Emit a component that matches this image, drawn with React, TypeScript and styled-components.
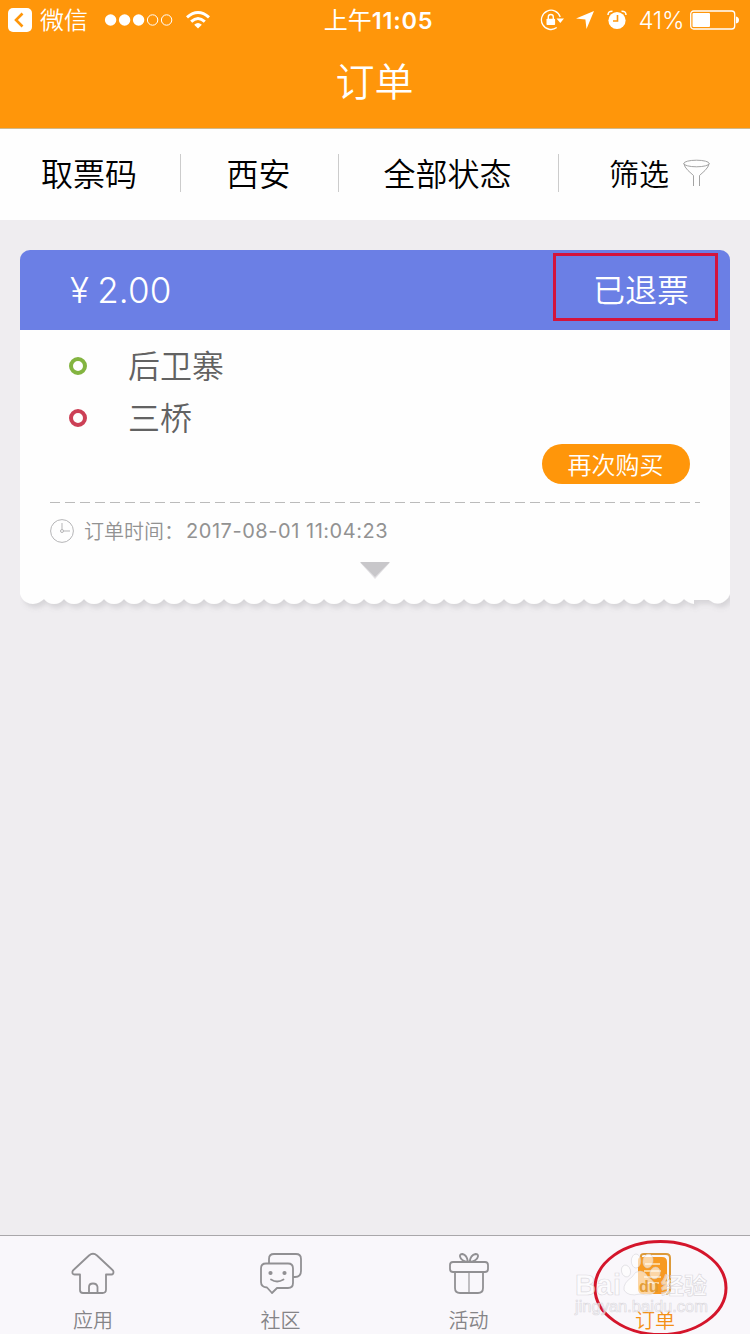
import React from "react";
import styled, { createGlobalStyle } from "styled-components";

const ORANGE = "#ff960a";
const cjk = `"Noto Sans CJK SC", sans-serif`;
const latin = `Inter, "Noto Sans CJK SC", sans-serif`;

const GlobalStyle = createGlobalStyle`
  * { box-sizing: border-box; }
  body { margin: 0; background: #efedf0; font-family: ${cjk}; }
  svg { display: block; flex: none; }
`;

const Screen = styled.div`
  position: relative;
  display: flex;
  flex-direction: column;
  width: 750px;
  height: 1334px;
  overflow: hidden;
  background: #efedf0;
`;

const Header = styled.header`
  height: 129px;
  flex: none;
  background: ${ORANGE};
  border-bottom: 1px solid #cfb88c;
  color: #fff;
`;

const StatusBar = styled.div`
  display: grid;
  grid-template-columns: 250px 1fr 250px;
  align-items: center;
  height: 40px;
`;

const StatusGroup = styled.div<{ $end?: boolean }>`
  display: flex;
  align-items: center;
  justify-content: ${(p) => (p.$end ? "flex-end" : "flex-start")};
  height: 40px;
  padding: ${(p) => (p.$end ? "0 10px 0 0" : "0 0 0 8px")};
`;

const BackLabel = styled.span`
  margin: 0 16px 2px 8px;
  font-size: 24px;
  font-weight: 350;
  line-height: 38px;
`;

const Clock = styled.div`
  display: flex;
  justify-content: center;
  align-items: center;
  height: 40px;
  padding: 1px 0 0 7px;
  font-family: ${latin};
  font-size: 24px;
  line-height: 39px;
`;

const Digits = styled.span`
  font-weight: 600;
  font-size: 23.5px;
  letter-spacing: 0.8px;
`;

const Battery = styled.span`
  margin: 0 6px 0 12px;
  padding-top: 1px;
  font-family: ${latin};
  font-size: 24px;
  font-weight: 350;
  line-height: 39px;
  letter-spacing: -0.4px;
`;

const Title = styled.h1`
  margin: 0;
  height: 88px;
  padding-right: 1px;
  font-size: 39px;
  font-weight: 350;
  line-height: 78px;
  text-align: center;
`;

const FilterBar = styled.nav`
  display: flex;
  align-items: center;
  height: 91px;
  flex: none;
  padding-bottom: 4px;
  background: #fefefe;
`;

const Filter = styled.div<{ $width: number; $last?: boolean }>`
  display: flex;
  flex: none;
  align-items: center;
  justify-content: ${(p) => (p.$last ? "flex-end" : "center")};
  gap: 14px;
  width: ${(p) => p.$width}px;
  height: 38px;
  padding-right: ${(p) => (p.$last ? 40 : 2)}px;
  line-height: 35px;
  font-size: ${(p) => (p.$last ? 30 : 32)}px;
  font-weight: 350;
  color: #000;
  & + & { border-left: 1px solid #ccc; }
`;

const Content = styled.main`
  flex: 1;
  padding: 30px 20px 0;
`;

const CardHead = styled.div`
  display: flex;
  align-items: center;
  justify-content: space-between;
  height: 80px;
  padding: 0 12px 0 50px;
  border-radius: 10px 10px 0 0;
  background: #6b7fe5;
  color: #fff;
`;

const Price = styled.div`
  display: flex;
  gap: 8px;
  font-family: ${latin};
  font-size: 35px;
  font-weight: 350;
  line-height: 80px;
  letter-spacing: 0.2px;
`;

const Status = styled.div`
  width: 165px;
  height: 68px;
  margin-bottom: 6px;
  padding-right: 26px;
  border: 3px solid #d4133c;
  text-align: right;
  font-size: 32px;
  font-weight: 350;
  line-height: 65px;
`;

const CardBody = styled.div`
  display: flex;
  flex-direction: column;
  height: 260px;
  padding: 10px 30px 0;
  background: #fefefe;
`;

const Station = styled.div`
  display: flex;
  align-items: center;
  gap: 41px;
  height: 52px;
  padding-left: 19px;
  font-size: 32px;
  font-weight: 350;
  color: #626262;
`;

const StationName = styled.span`
  padding-bottom: 4px;
  line-height: 48px;
`;

const Ring = styled.i<{ $color: string }>`
  width: 18px;
  height: 18px;
  border: 4px solid ${(p) => p.$color};
  border-radius: 50%;
`;

const BuyAgain = styled.button`
  align-self: flex-end;
  width: 148px;
  height: 40px;
  margin: 0 10px 18px 0;
  padding: 0 1px 0 0;
  border: 0;
  border-radius: 20px;
  background: ${ORANGE};
  color: #fff;
  font-family: ${cjk};
  font-size: 24px;
  font-weight: 350;
  line-height: 40px;
`;

const Dashes = styled.div`
  height: 1px;
  background: repeating-linear-gradient(90deg, #bbb 0 10px, transparent 10px 15px);
`;

const OrderTime = styled.div`
  display: flex;
  align-items: center;
  height: 56px;
  font-family: ${latin};
  font-size: 20px;
  color: #929292;
`;

const TimeLabel = styled.span`
  width: 102px;
  padding: 0 0 2px 10px;
  white-space: nowrap;
  font-family: ${cjk};
  font-weight: 350;
`;

const TimeValue = styled.span`
  margin-left: 10px;
  letter-spacing: 0.54px;
  white-space: nowrap;
`;

const ExpandArrow = styled.svg`
  align-self: center;
  margin-top: 1px;
`;

const TabBar = styled.footer`
  display: grid;
  grid-template-columns: 186px 189px 187px 186px;
  height: 99px;
  flex: none;
  border-top: 1px solid #a9a7aa;
  background: #f9f7fb;
`;

const Tab = styled.div<{ $active?: boolean }>`
  display: flex;
  flex-direction: column;
  align-items: center;
  padding-top: 15px;
  color: ${(p) => (p.$active ? "#f38f14" : "#858487")};
  font-size: 20px;
  font-weight: 350;
  line-height: 26px;
`;

const TabLabel = styled.span`
  margin-top: 12px;
`;

const Highlight = styled.svg`
  position: absolute;
  right: 0;
  bottom: 0;
`;

// Torn ticket edge: regular scallops, a short flat break, then a last scallop.
const scallops = Array.from({ length: 32 }, () => "a12.5 12.5 0 0 0 20 0").join("");
const edge = `M0 0V4Q2 10 6 12 Q15 17 24 9 ${scallops}Q668 13 674 14V10H689Q699 18 708 8L710 4V0Z`;

const TicketEdge = () => (
  <svg width="710" height="26" viewBox="0 0 710 26">
    <defs>
      <filter id="edgeShadow" x="0" y="0" width="100%" height="2">
        <feDropShadow dx="3" dy="4" stdDeviation="2.8" floodColor="#77757a" floodOpacity="0.2" />
      </filter>
    </defs>
    <path d={edge} fill="#fefefe" filter="url(#edgeShadow)" />
  </svg>
);

export default function App() {
  return (
    <>
      <GlobalStyle />
      <Screen>
        <Header>
          <StatusBar>
            <StatusGroup>
              <svg width="24" height="24" viewBox="0 0 24 24">
                <rect width="24" height="24" rx="5" fill="#fff" />
                <path d="M14.500 5.500 8 12l6.500 6.500" fill="none" stroke={ORANGE} strokeWidth="2.600" />
              </svg>
              <BackLabel>微信</BackLabel>
              <svg width="69" height="12" viewBox="0 0 69 12">
                {[0, 1, 2].map((i) => (
                  <circle key={i} cx={6.6 + i * 14} cy="6" r="5.700" fill="#fff" />
                ))}
                {[3, 4].map((i) => (
                  <circle key={i} cx={6.6 + i * 14} cy="6" r="5.200" fill="none" stroke="#fff" />
                ))}
              </svg>
              <svg width="26" height="20" viewBox="0 0 26 20" style={{ marginLeft: 12 }}>
                <g fill="none" stroke="#fff" strokeWidth="3">
                  <path d="M2 7.300Q13-2.300 24 7.300" />
                  <path d="M6.200 11.600Q13 5.500 19.800 11.600" />
                </g>
                <path d="M9.200 14.700Q13 11.500 16.800 14.700L13 18.600Z" fill="#fff" />
              </svg>
            </StatusGroup>
            <Clock>
              上午<Digits>11:05</Digits>
            </Clock>
            <StatusGroup $end>
              <svg width="24" height="22" viewBox="0 0 24 22">
                <path d="M20.200 8A9.600 9.600 0 1 0 16.700 18.600" fill="none" stroke="#fff" strokeWidth="1.300" />
                <path d="M16.500 9.500h7.500l-3.700 4.500z" fill="#fff" />
                <rect x="6.500" y="9.700" width="8.600" height="6.300" rx="0.800" fill="#fff" />
                <path d="M8.300 10V8a2.500 2.500 0 0 1 5 0v2" fill="none" stroke="#fff" strokeWidth="1.400" />
              </svg>
              <svg width="18" height="18" viewBox="0 0 18 18" style={{ marginLeft: 12 }}>
                <path d="M18 0 10.500 18 9.400 8.600 0 7.500Z" fill="#fff" />
              </svg>
              <svg width="20" height="20" viewBox="0 0 20 20" style={{ marginLeft: 13 }}>
                <circle cx="10" cy="10.500" r="8.600" fill="#fff" />
                <path d="M1 5Q1 1 5.500 1.200M19 5Q19 1 14.500 1.200" fill="none" stroke="#fff" strokeWidth="1.500" />
                <path d="M10.500 5v6H6" fill="none" stroke={ORANGE} strokeWidth="1.600" />
              </svg>
              <Battery>41%</Battery>
              <svg width="50" height="20" viewBox="0 0 50 20">
                <rect x="0.700" y="1" width="44" height="18" rx="3" fill="none" stroke="#fff" strokeWidth="1.300" />
                <rect x="2.500" y="3" width="17.500" height="14" rx="1" fill="#fff" />
                <path d="M46 6.500q3 .5 3 3.500t-3 3.500z" fill="#fff" />
              </svg>
            </StatusGroup>
          </StatusBar>
          <Title>订单</Title>
        </Header>

        <FilterBar>
          <Filter $width={180}>取票码</Filter>
          <Filter $width={158}>西安</Filter>
          <Filter $width={220}>全部状态</Filter>
          <Filter $width={192} $last>
            筛选
            <svg width="27" height="28" viewBox="0 0 27 28">
              <g fill="none" stroke="#999" strokeWidth="0.900">
                <ellipse cx="13.500" cy="4.500" rx="12.700" ry="3.300" />
                <path d="M.8 4.500Q1.500 8 5 11.500L10.500 16.500V27M26.200 4.500Q25.500 8 22 11.500L16.500 16.500V27" />
              </g>
            </svg>
          </Filter>
        </FilterBar>

        <Content>
          <CardHead>
            <Price>
              <span>¥</span>
              <span>2.00</span>
            </Price>
            <Status>已退票</Status>
          </CardHead>
          <CardBody>
            <Station>
              <Ring $color="#83b440" />
              <StationName>后卫寨</StationName>
            </Station>
            <Station>
              <Ring $color="#cc4056" />
              <StationName>三桥</StationName>
            </Station>
            <BuyAgain>再次购买</BuyAgain>
            <Dashes />
            <OrderTime>
              <svg width="24" height="24" viewBox="0 0 24 24">
                <g fill="none" stroke="#b5b5b7">
                  <circle cx="12" cy="12" r="11.400" />
                  <circle cx="12" cy="12" r="1.500" />
                  <path d="M12 4v6.500M13.500 12H20" />
                </g>
              </svg>
              <TimeLabel>订单时间：</TimeLabel>
              <TimeValue>2017-08-01 11:04:23</TimeValue>
            </OrderTime>
            <ExpandArrow width="32" height="20" viewBox="0 0 32 20">
              <path d="M1.500 3h29L16 19Z" fill="#e3e1e4" />
              <path d="M1 2h30L16 17Z" fill="#c8c7ca" />
            </ExpandArrow>
          </CardBody>
          <TicketEdge />
        </Content>

        <TabBar>
          <Tab>
            <svg width="44" height="44" viewBox="0 0 44 44" fill="none" stroke="#919093" strokeWidth="1.800" strokeLinejoin="round">
              <path d="M9 23.500H3.500Q1 23.500 1.500 20.500Q1.700 19.500 3 18.500L18 4.500Q22 1 26 4.500L41 18.500Q42.500 19.800 42.500 21Q42.500 23.500 40.500 23.500H35V38.500Q35 42 31.500 42H12Q9 42 9 39Z" />
              <path d="M18 42V36Q18 32.500 22 32.500T26.500 36V42" />
            </svg>
            <TabLabel>应用</TabLabel>
          </Tab>
          <Tab>
            <svg width="44" height="44" viewBox="0 0 44 44" fill="none" stroke="#919093" strokeWidth="1.800" strokeLinejoin="round">
              <path d="M10 12V8Q10 3 15 3H37Q42 3 42 8V20Q42 26 36 26H34" />
              <path d="M7 12.500H29Q34 12.500 34 17.500V32Q34 37 29 37H18L13 42 8 36.500Q2 36 2 31V17.500Q2 12.500 7 12.500Z" />
              <path d="M12 28.500Q18 32.500 24.500 28.500" strokeLinecap="round" />
              <circle cx="11.500" cy="22" r="1.200" fill="#919093" />
              <circle cx="25.500" cy="22" r="1.200" fill="#919093" />
            </svg>
            <TabLabel>社区</TabLabel>
          </Tab>
          <Tab>
            <svg width="44" height="44" viewBox="0 0 44 44" fill="none" stroke="#919093" strokeWidth="1.800">
              <rect x="3" y="11" width="38" height="10" rx="3" />
              <path d="M8 21V37Q8 42 13 42H31Q36 42 36 37V21" />
              <path d="M22 22V42" strokeWidth="1.100" />
              <path d="M21 11Q20 4 15.500 3Q12.500 3 13 5.500Q14 10 21 11M22.500 11Q23.500 4 28.500 3Q31.500 3 31 5.500Q30 10 22.500 11" />
            </svg>
            <TabLabel>活动</TabLabel>
          </Tab>
          <Tab $active>
            <svg width="44" height="44" viewBox="0 0 44 44">
              <path d="M8 6V5Q8 3 11 3H33Q37 3 37 7V38Q37 42 33 43" fill="none" stroke="#dc9a3a" strokeWidth="2" />
              <path d="M8 6H29Q34 6 34 11V38Q34 43 29 43H10Q5 43 5 38V10Q5 6 8 6Z" fill="#f79a22" />
              <path d="M12 13h15M11 20h17M11 26h17M12 32h14" stroke="#ffe6bd" strokeWidth="1.500" />
            </svg>
            <TabLabel>订单</TabLabel>
          </Tab>
        </TabBar>

        <Highlight width="190" height="109" viewBox="0 0 190 109">
          <ellipse cx="100.500" cy="63" rx="65.500" ry="46.500" fill="none" stroke="#d4152b" strokeWidth="3" />
          <g fill="#fff" fillOpacity="0.600" stroke="#cfccd2" strokeOpacity="0.700" strokeWidth="0.700">
            <ellipse cx="66" cy="46" rx="4.500" ry="6" transform="rotate(-15 66 46)" />
            <ellipse cx="76" cy="36" rx="4.700" ry="7" />
            <ellipse cx="88" cy="36" rx="5" ry="7" transform="rotate(10 88 36)" />
            <ellipse cx="95" cy="48" rx="5" ry="6" transform="rotate(20 95 48)" />
            <path d="M80 46Q85 46 88 52Q98 59 96 65Q93 72 80 69Q68 72 64 65Q63 58 72 52Q75 46 80 46Z" />
            <text x="15" y="70" fontFamily="Liberation Sans, sans-serif" fontSize="29" fontWeight="700" textLength="46">Bai</text>
            <text x="79" y="67" fontFamily="Liberation Sans, sans-serif" fontSize="16" fontWeight="700" fill="#e0962a" fillOpacity="0.900" stroke="none">du</text>
            <text x="101" y="69" fontFamily="Noto Sans CJK SC, sans-serif" fontSize="23" fontWeight="700">经验</text>
            <text x="15" y="87" fontFamily="Liberation Sans, sans-serif" fontSize="16.500" textLength="133">jingyan.baidu.com</text>
          </g>
        </Highlight>
      </Screen>
    </>
  );
}
